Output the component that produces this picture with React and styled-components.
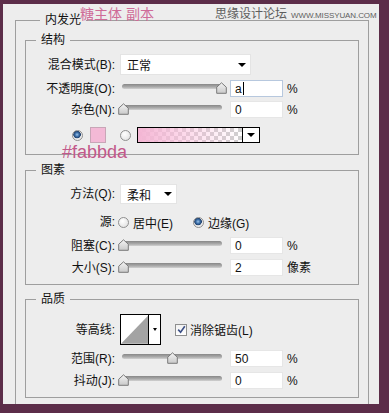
import React from "react";
import styled, { createGlobalStyle } from "styled-components";

const Global = createGlobalStyle`
  html, body {
    margin: 0;
    padding: 0;
    background: #5c2d49;
  }
  body {
    font-family: "Liberation Sans", "Noto Sans CJK SC", sans-serif;
    font-size: 12px;
    color: #111;
  }
`;

const Page = styled.div`
  width: 389px;
  height: 413px;
  padding: 4px 0 0 3px;
  box-sizing: border-box;
  overflow: hidden;
`;

const Panel = styled.div`
  position: relative;
  width: 376px;
  height: 400px;
  box-sizing: border-box;
  padding: 8px 10px 0 12px;
  background: #ededed;
  overflow: hidden;
`;

const Group = styled.fieldset`
  margin: ${(p) => p.$mt || 0}px 0 0;
  padding: ${(p) => p.$pad};
  border: 1px solid #9e9e9e;
  min-width: 0;
`;

const Legend = styled.legend`
  margin-left: ${(p) => p.$ml}px;
  padding: 0 5px;
  font-size: 12px;
  line-height: 16px;
  color: #111;
`;

const Row = styled.div`
  display: flex;
  align-items: ${(p) => p.$align || "center"};
  height: ${(p) => p.$h}px;
  margin-top: ${(p) => p.$mt}px;
  padding-left: ${(p) => p.$indent || 0}px;
`;

const Label = styled.div`
  width: 89px;
  flex-shrink: 0;
  margin-right: ${(p) => (p.$mr === undefined ? 5 : p.$mr)}px;
  text-align: right;
  white-space: nowrap;
  line-height: 16px;
`;

const Select = styled.div`
  display: flex;
  align-items: center;
  justify-content: space-between;
  width: ${(p) => p.$w}px;
  height: 100%;
  box-sizing: border-box;
  padding: 0 4px 0 6px;
  background: #fff;
  border: 1px solid #e4e4e4;
`;

const DownArrow = styled.span`
  width: 0;
  height: 0;
  border-left: 4px solid transparent;
  border-right: 4px solid transparent;
  border-top: 4px solid #000;
`;

const SliderWrap = styled.div`
  position: relative;
  width: 100px;
  height: 100%;
  margin-left: 2px;
  flex-shrink: 0;
`;

const Track = styled.div`
  margin-top: 4px;
  height: 5px;
  border-radius: 3px;
  background: linear-gradient(#878787, #acacac 60%, #d2d2d2);
`;

const Thumb = styled.svg`
  position: absolute;
  top: 2px;
`;

const Field = styled.div`
  display: flex;
  align-items: center;
  width: 53px;
  height: 100%;
  margin-left: 8px;
  box-sizing: border-box;
  padding-left: 4px;
  background: #fff;
  border: 1px solid ${(p) => (p.$focus ? "#b7c8de" : "#e6e6e6")};
  font-size: 12px;
`;

const Caret = styled.span`
  width: 1px;
  height: 13px;
  margin-left: 1px;
  background: #000;
`;

const Unit = styled.span`
  margin-left: 4px;
  line-height: 16px;
`;

const RadioDot = styled.span`
  display: inline-block;
  box-sizing: border-box;
  width: 11px;
  height: 11px;
  flex-shrink: 0;
  border-radius: 50%;
  border: 1px solid #8f8f8f;
  background: ${(p) =>
    p.$on
      ? "radial-gradient(circle at 45% 40%, #9cc3ea 0, #3c6fa8 2px, #1f3f6b 3.5px, #e8e8e8 4px, #f6f6f6)"
      : "radial-gradient(circle at 40% 35%, #ffffff, #dcdcdc)"};
`;

const Option = styled.div`
  display: flex;
  align-items: center;
  margin-left: ${(p) => p.$ml}px;
  gap: 4px;
`;

const Swatch = styled.div`
  width: 16px;
  height: 16px;
  margin-left: 7px;
  box-sizing: border-box;
  background: #f3b9d6;
  border: 1px solid #c8a6b7;
`;

const GradientBox = styled.div`
  display: flex;
  margin-left: 6px;
  height: 16px;
  border: 1px solid #000;
  box-sizing: border-box;
`;

const GradientFill = styled.div`
  width: 104px;
  height: 100%;
  background: linear-gradient(to right, #f4b6d4 0%, rgba(250, 187, 218, 0.6) 40%, rgba(250, 187, 218, 0) 100%),
    repeating-conic-gradient(#cfcfcf 0 25%, #ffffff 0 50%) 0 0 / 8px 8px;
`;

const ArrowCell = styled.div`
  display: flex;
  align-items: center;
  justify-content: center;
  width: 16px;
  border-left: 1px solid #000;
  background: #fff;
`;

const Contour = styled.div`
  display: flex;
  width: 41px;
  height: 31px;
  box-sizing: border-box;
  border: 1px solid #000;
  background: #fff;
`;

const ContourArrow = styled.div`
  display: flex;
  align-items: center;
  justify-content: center;
  width: 11px;
  border-left: 1px solid #000;
`;

const SmallArrow = styled.span`
  width: 0;
  height: 0;
  border-left: 2px solid transparent;
  border-right: 2px solid transparent;
  border-top: 3px solid #000;
`;

const Check = styled.div`
  display: flex;
  align-items: center;
  margin-left: 14px;
  gap: 3px;
`;

const CheckBox = styled.span`
  display: flex;
  align-items: center;
  justify-content: center;
  width: 12px;
  height: 12px;
  box-sizing: border-box;
  border: 1px solid #8e8f8f;
  background: linear-gradient(#f2f2f2, #ffffff);
`;

const Stamp = styled.div`
  position: absolute;
  left: ${(p) => p.$x}px;
  top: ${(p) => p.$y}px;
  color: ${(p) => p.$color};
  font-size: ${(p) => p.$size}px;
  line-height: 1;
  white-space: nowrap;
`;

const Site = styled.span`
  margin-left: 4px;
  font-family: "Liberation Sans", sans-serif;
  font-size: 8px;
  letter-spacing: -0.1px;
`;

const Slider = ({ value }) => (
  <SliderWrap>
    <Track />
    <Thumb
      width="11"
      height="12"
      viewBox="0 0 11 12"
      style={{ left: 1 + value * 0.98 - 5.5 }}
    >
      <defs>
        <linearGradient id="thumbFill" x1="0" y1="0" x2="0" y2="1">
          <stop offset="0" stopColor="#f4f4f4" />
          <stop offset="1" stopColor="#c9c9c9" />
        </linearGradient>
      </defs>
      <path
        d="M5.5 0.8 L10.3 5.2 L10.3 11.3 L0.7 11.3 L0.7 5.2 Z"
        fill="url(#thumbFill)"
        stroke="#7a7a7a"
        strokeWidth="1"
        strokeLinejoin="round"
      />
    </Thumb>
  </SliderWrap>
);

const NumberRow = ({ label, value, field, unit = "%", mt, focus }) => (
  <Row $h={17} $mt={mt}>
    <Label>{label}</Label>
    <Slider value={value} />
    <Field $focus={focus}>
      {field}
      {focus && <Caret />}
    </Field>
    <Unit>{unit}</Unit>
  </Row>
);

export default function App() {
  return (
    <Page>
      <Global />
      <Panel>
        <Group $pad="4px 9px 20px">
          <Legend $ml={15}>内发光</Legend>

          <Group $pad="0 0 11px">
            <Legend $ml={10}>结构</Legend>
            <Row $h={21} $mt={6}>
              <Label>混合模式(B):</Label>
              <Select $w={131}>
                正常
                <DownArrow />
              </Select>
            </Row>
            <NumberRow label="不透明度(O):" value={100} field="a" mt={5} focus />
            <NumberRow label="杂色(N):" value={0} field="0" mt={4} />
            <Row $h={16} $mt={9} $indent={46}>
              <RadioDot $on />
              <Swatch />
              <RadioDot style={{ marginLeft: 14 }} />
              <GradientBox>
                <GradientFill />
                <ArrowCell>
                  <DownArrow />
                </ArrowCell>
              </GradientBox>
            </Row>
          </Group>

          <Group $mt={7} $pad="0 0 8px">
            <Legend $ml={10}>图素</Legend>
            <Row $h={20} $mt={6}>
              <Label>方法(Q):</Label>
              <Select $w={57}>
                柔和
                <DownArrow />
              </Select>
            </Row>
            <Row $h={16} $mt={10}>
              <Label $mr={3}>源:</Label>
              <Option $ml={0}>
                <RadioDot />
                居中(E)
              </Option>
              <Option $ml={20}>
                <RadioDot $on />
                边缘(G)
              </Option>
            </Row>
            <NumberRow label="阻塞(C):" value={0} field="0" mt={7} />
            <NumberRow label="大小(S):" value={0} field="2" unit="像素" mt={5} />
          </Group>

          <Group $mt={6} $pad="0 0 8px">
            <Legend $ml={10}>品质</Legend>
            <Row $h={31} $mt={7}>
              <Label>等高线:</Label>
              <Contour>
                <svg width="28" height="29" viewBox="0 0 28 29">
                  <path d="M0 29 L28 0 L28 29 Z" fill="#a3a3a3" />
                </svg>
                <ContourArrow>
                  <SmallArrow />
                </ContourArrow>
              </Contour>
              <Check>
                <CheckBox>
                  <svg width="9" height="9" viewBox="0 0 9 9">
                    <path d="M1.2 4.6 L3.6 7.2 L7.8 1.2" fill="none" stroke="#3b4f86" strokeWidth="1.6" />
                  </svg>
                </CheckBox>
                消除锯齿(L)
              </Check>
            </Row>
            <NumberRow label="范围(R):" value={50} field="50" mt={5} />
            <NumberRow label="抖动(J):" value={0} field="0" mt={5} />
          </Group>
        </Group>

        <Stamp $x={77} $y={3} $size={14} $color="#cf6b98">
          糖主体 副本
        </Stamp>
        <Stamp $x={212} $y={4} $size={12} $color="#5e5e5e">
          思缘设计论坛
          <Site>WWW.MISSYUAN.COM</Site>
        </Stamp>
        <Stamp
          $x={59}
          $y={139}
          $size={18}
          $color="#c2588a"
          style={{ fontFamily: '"Liberation Sans", sans-serif' }}
        >
          #fabbda
        </Stamp>
      </Panel>
    </Page>
  );
}
